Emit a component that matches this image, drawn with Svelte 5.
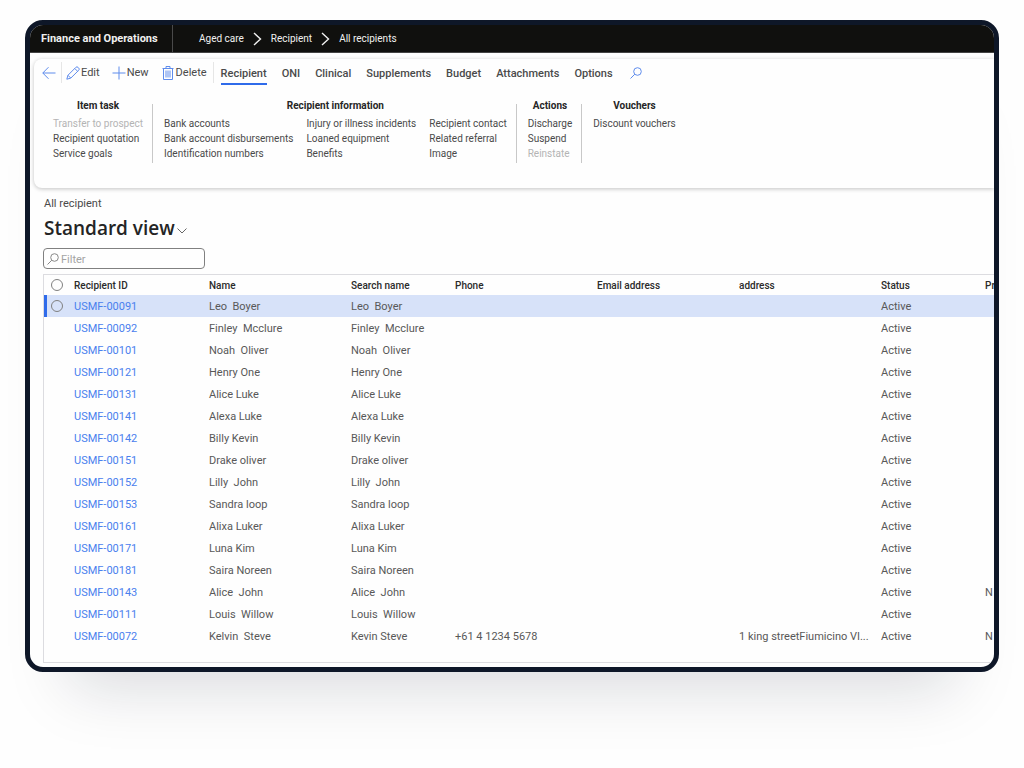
<script lang="ts">
  type Recipient = {
    id: string;
    name: string;
    search: string;
    phone?: string;
    address?: string;
    next?: string;
  };

  const crumbs = ["Aged care", "Recipient", "All recipients"];
  const tabs = ["Recipient", "ONI", "Clinical", "Supplements", "Budget", "Attachments", "Options"];
  const disabled = ["Transfer to prospect", "Reinstate"];

  const groups = [
    {
      title: "Item task",
      columns: [["Transfer to prospect", "Recipient quotation", "Service goals"]],
    },
    {
      title: "Recipient information",
      columns: [
        ["Bank accounts", "Bank account disbursements", "Identification numbers"],
        ["Injury or illness incidents", "Loaned equipment", "Benefits"],
        ["Recipient contact", "Related referral", "Image"],
      ],
    },
    { title: "Actions", columns: [["Discharge", "Suspend", "Reinstate"]] },
    { title: "Vouchers", columns: [["Discount vouchers"]] },
  ];

  const rows: Recipient[] = [
    { id: "USMF-00091", name: "Leo  Boyer", search: "Leo  Boyer" },
    { id: "USMF-00092", name: "Finley  Mcclure", search: "Finley  Mcclure" },
    { id: "USMF-00101", name: "Noah  Oliver", search: "Noah  Oliver" },
    { id: "USMF-00121", name: "Henry One", search: "Henry One" },
    { id: "USMF-00131", name: "Alice Luke", search: "Alice Luke" },
    { id: "USMF-00141", name: "Alexa Luke", search: "Alexa Luke" },
    { id: "USMF-00142", name: "Billy Kevin", search: "Billy Kevin" },
    { id: "USMF-00151", name: "Drake oliver", search: "Drake oliver" },
    { id: "USMF-00152", name: "Lilly  John", search: "Lilly  John" },
    { id: "USMF-00153", name: "Sandra loop", search: "Sandra loop" },
    { id: "USMF-00161", name: "Alixa Luker", search: "Alixa Luker" },
    { id: "USMF-00171", name: "Luna Kim", search: "Luna Kim" },
    { id: "USMF-00181", name: "Saira Noreen", search: "Saira Noreen" },
    { id: "USMF-00143", name: "Alice  John", search: "Alice  John", next: "N" },
    { id: "USMF-00111", name: "Louis  Willow", search: "Louis  Willow" },
    {
      id: "USMF-00072",
      name: "Kelvin  Steve",
      search: "Kevin Steve",
      phone: "+61 4 1234 5678",
      address: "1 king streetFiumicino VI...",
      next: "N",
    },
  ];

  let activeTab = $state("Recipient");
  let selected = $state("USMF-00091");
  let filter = $state("");

  const visible = $derived(
    rows.filter((r) => r.name.toLowerCase().includes(filter.toLowerCase()))
  );
</script>

<div class="window">
  <header class="topbar">
    <span class="product">Finance and Operations</span>
    <nav class="crumbs" aria-label="Breadcrumb">
      {#each crumbs as crumb, i}
        {#if i > 0}
          <svg width="9" height="14" viewBox="0 0 9 14"><path d="M1 1l6.500 6L1 13" /></svg>
        {/if}
        <a href="#{crumb}">{crumb}</a>
      {/each}
    </nav>
  </header>

  <section class="ribbon">
    <div class="toolbar">
      <button class="back" aria-label="Back">
        <svg width="14" height="14" viewBox="0 0 14 14"><path d="M13.5 7H.8M6.5 1.2L.8 7l5.7 5.8" /></svg>
      </button>
      <button class="edit">
        <svg width="14" height="14" viewBox="0 0 14 14">
          <path d="M.8 13.2L2 9.2l7.8-7.8a1.6 1.6 0 0 1 2.3 0l.6.6a1.6 1.6 0 0 1 0 2.3l-7.9 7.8zM8.8 2.5l2.8 2.8M2 9.3L4.700 12" />
        </svg>Edit
      </button>
      <button class="new">
        <svg width="14" height="14" viewBox="0 0 14 14"><path d="M7 .5v13M.5 7h13" /></svg>New
      </button>
      <button class="delete">
        <svg width="12" height="14" viewBox="0 0 12 14">
          <path d="M.5 2.5h11M4 2.5v-2h4v2M1.5 2.5v11h9v-11M4 4.500v7M6 4.500v7M8 4.500v7" />
        </svg>Delete
      </button>
      <div class="tabs">
        {#each tabs as tab}
          <button class="tab" class:active={tab === activeTab} onclick={() => (activeTab = tab)}>{tab}</button>
        {/each}
      </div>
      <button class="find" aria-label="Search">
        <svg width="12" height="12" viewBox="0 0 12 12"><circle cx="7.5" cy="4.5" r="3.8" /><path d="M4.8 7.2L.5 11.5" /></svg>
      </button>
    </div>

    <div class="groups">
      {#each groups as group}
        <div class="group">
          <h2>{group.title}</h2>
          <div class="columns">
            {#each group.columns as column}
              <div class="actions">
                {#each column as action}
                  <button disabled={disabled.includes(action)}>{action}</button>
                {/each}
              </div>
            {/each}
          </div>
        </div>
      {/each}
    </div>
  </section>

  <main>
    <p class="caption">All recipient</p>
    <h1>
      Standard view
      <svg width="10" height="6" viewBox="0 0 10 6"><path d="M.5.5L5 5 9.5.5" /></svg>
    </h1>
    <label class="filter">
      <svg width="12" height="12" viewBox="0 0 12 12"><circle cx="7.5" cy="4.5" r="3.8" /><path d="M4.8 7.2L.5 11.5" /></svg>
      <input type="text" placeholder="Filter" aria-label="Filter" bind:value={filter} />
    </label>

    <div class="grid">
      <table>
        <colgroup>
          <col class="w-select" />
          <col class="w-id" />
          <col class="w-wide" />
          <col class="w-narrow" />
          <col class="w-wide" />
          <col class="w-wide" />
          <col class="w-wide" />
          <col class="w-narrow" />
          <col />
        </colgroup>
        <thead>
          <tr>
            <th><input type="radio" name="row" value="" aria-label="Select none" /></th>
            <th>Recipient ID</th>
            <th>Name</th>
            <th>Search name</th>
            <th>Phone</th>
            <th>Email address</th>
            <th>address</th>
            <th>Status</th>
            <th>Pr</th>
          </tr>
        </thead>
        <tbody>
          {#each visible as row}
            <tr class:selected={row.id === selected} onclick={() => (selected = row.id)}>
              <td>
                {#if row.id === selected}
                  <input type="radio" name="row" value={row.id} aria-label={row.id} />
                {/if}
              </td>
              <td><a href="#{row.id}">{row.id}</a></td>
              <td>{row.name}</td>
              <td>{row.search}</td>
              <td>{row.phone ?? ""}</td>
              <td></td>
              <td>{row.address ?? ""}</td>
              <td>Active</td>
              <td>{row.next ?? ""}</td>
            </tr>
          {/each}
        </tbody>
      </table>
    </div>
  </main>
</div>

<style>
  :global(body) {
    background: #fefefe;
  }

  .window {
    box-sizing: border-box;
    margin: 20px 25px 96px;
    border: 5px solid #0e1728;
    border-radius: 18px;
    overflow: hidden;
    background: #fefefe;
    box-shadow: 0 60px 60px -44px rgba(15, 20, 40, 0.15);
    font-family: Roboto, "Segoe UI", sans-serif;
    font-size: 11px;
    line-height: 15px;
    color: #4a4a4a;
  }

  button {
    padding: 0;
    border: 0;
    background: none;
    font: inherit;
    color: inherit;
    cursor: pointer;
  }

  svg {
    flex: none;
    fill: none;
    stroke: currentColor;
  }

  a {
    color: inherit;
    text-decoration: none;
  }

  .topbar {
    display: flex;
    align-items: center;
    height: 27px;
    border-bottom: 1px solid #444;
    background: #10100e;
    color: #f0f0f0;
  }

  .product {
    width: 131px;
    padding-left: 11px;
    border-right: 1px solid #4a4a4a;
    line-height: 27px;
    font-weight: 700;
    white-space: nowrap;
  }

  .crumbs {
    display: flex;
    align-items: center;
    gap: 9px;
    padding-left: 26px;
    font-size: 10px;
  }

  .crumbs svg {
    stroke-width: 1.4;
  }

  .ribbon {
    box-sizing: border-box;
    height: 129px;
    margin: 6px 0 0 4px;
    padding: 3px 0 0 8px;
    border-radius: 8px 0 0 8px;
    box-shadow: 0 1px 4px rgba(0, 0, 0, 0.24);
  }

  .toolbar {
    display: flex;
  }

  .toolbar > button {
    display: flex;
    align-items: center;
    gap: 1px;
    height: 21px;
  }

  .toolbar > button svg {
    color: #5f8cec;
  }

  .toolbar > .back {
    width: 20px;
    border-right: 1px solid #e6e6e6;
  }

  .toolbar > .edit {
    margin-left: 4px;
  }

  .toolbar > .new {
    margin-left: 12px;
  }

  .toolbar > .delete {
    gap: 2px;
    margin-left: 13px;
    padding-right: 6px;
    border-right: 1px solid #e6e6e6;
  }

  .tabs {
    display: flex;
    gap: 15px;
    margin-left: 7px;
  }

  .tab {
    height: 23px;
    padding-top: 1px;
    border-bottom: 2px solid transparent;
    font-weight: 500;
  }

  .tab.active {
    border-bottom-color: #2f6bea;
  }

  .toolbar > .find {
    margin-left: 17px;
  }

  .groups {
    display: flex;
    margin-top: 12px;
    font-size: 10px;
  }

  .group {
    position: relative;
    padding: 0 10px 0 11px;
  }

  .group + .group::before {
    content: "";
    position: absolute;
    top: 7px;
    bottom: 0;
    left: -1px;
    width: 1px;
    background: #c8c8c8;
  }

  .group h2 {
    margin: 0 0 3px;
    padding-top: 1px;
    font-size: 10px;
    line-height: 15px;
    font-weight: 700;
    text-align: center;
    color: #262626;
  }

  .columns {
    display: flex;
    gap: 13px;
    min-height: 47px;
  }

  .actions {
    display: flex;
    flex-direction: column;
    align-items: flex-start;
  }

  .actions button {
    white-space: nowrap;
  }

  .actions button:disabled {
    color: #b4b4b4;
    cursor: default;
  }

  main {
    padding: 8px 0 4px 13px;
  }

  .caption {
    margin: 0;
    padding-left: 1px;
  }

  h1 {
    display: flex;
    align-items: center;
    gap: 2px;
    margin: 4px 0 7px;
    padding-left: 1px;
    font-family: "Open Sans", "Segoe UI", sans-serif;
    font-size: 19px;
    line-height: 26px;
    font-weight: 600;
    color: #242424;
  }

  h1 svg {
    margin-top: 5px;
    stroke: #666;
  }

  .filter {
    display: flex;
    align-items: center;
    gap: 2px;
    box-sizing: border-box;
    width: 162px;
    height: 21px;
    padding: 0 3px;
    border: 1px solid #808080;
    border-radius: 4px;
    color: #888;
  }

  .filter input {
    flex: 1;
    min-width: 0;
    padding: 2px 0 0;
    border: 0;
    outline: 0;
    background: none;
    font: inherit;
  }

  .filter input::placeholder {
    color: #a4a4a4;
  }

  .grid {
    overflow: hidden;
    margin-top: 5px;
    padding-bottom: 15px;
    border: 1px solid #dcdce0;
    border-right: 0;
  }

  table {
    width: 100%;
    table-layout: fixed;
    border-collapse: collapse;
  }

  .w-select {
    width: 29px;
  }

  .w-id {
    width: 135px;
  }

  .w-wide {
    width: 142px;
  }

  .w-narrow {
    width: 104px;
  }

  th,
  td {
    height: 22px;
    padding: 0 0 0 1px;
    text-align: left;
    white-space: pre;
  }

  th {
    height: 20px;
    font-size: 10px;
    font-weight: 500;
    color: #2b2b2b;
  }

  td {
    color: #585858;
  }

  td a {
    color: #4a80ee;
  }

  th:first-child,
  td:first-child {
    padding: 0 0 0 7px;
  }

  .selected {
    background: #d7e2f9;
    box-shadow: inset 3px 0 #2f6bea;
  }

  input[type="radio"] {
    display: block;
    appearance: none;
    box-sizing: border-box;
    width: 12px;
    height: 12px;
    margin: 0;
    border: 1px solid #808080;
    border-radius: 50%;
  }
</style>
